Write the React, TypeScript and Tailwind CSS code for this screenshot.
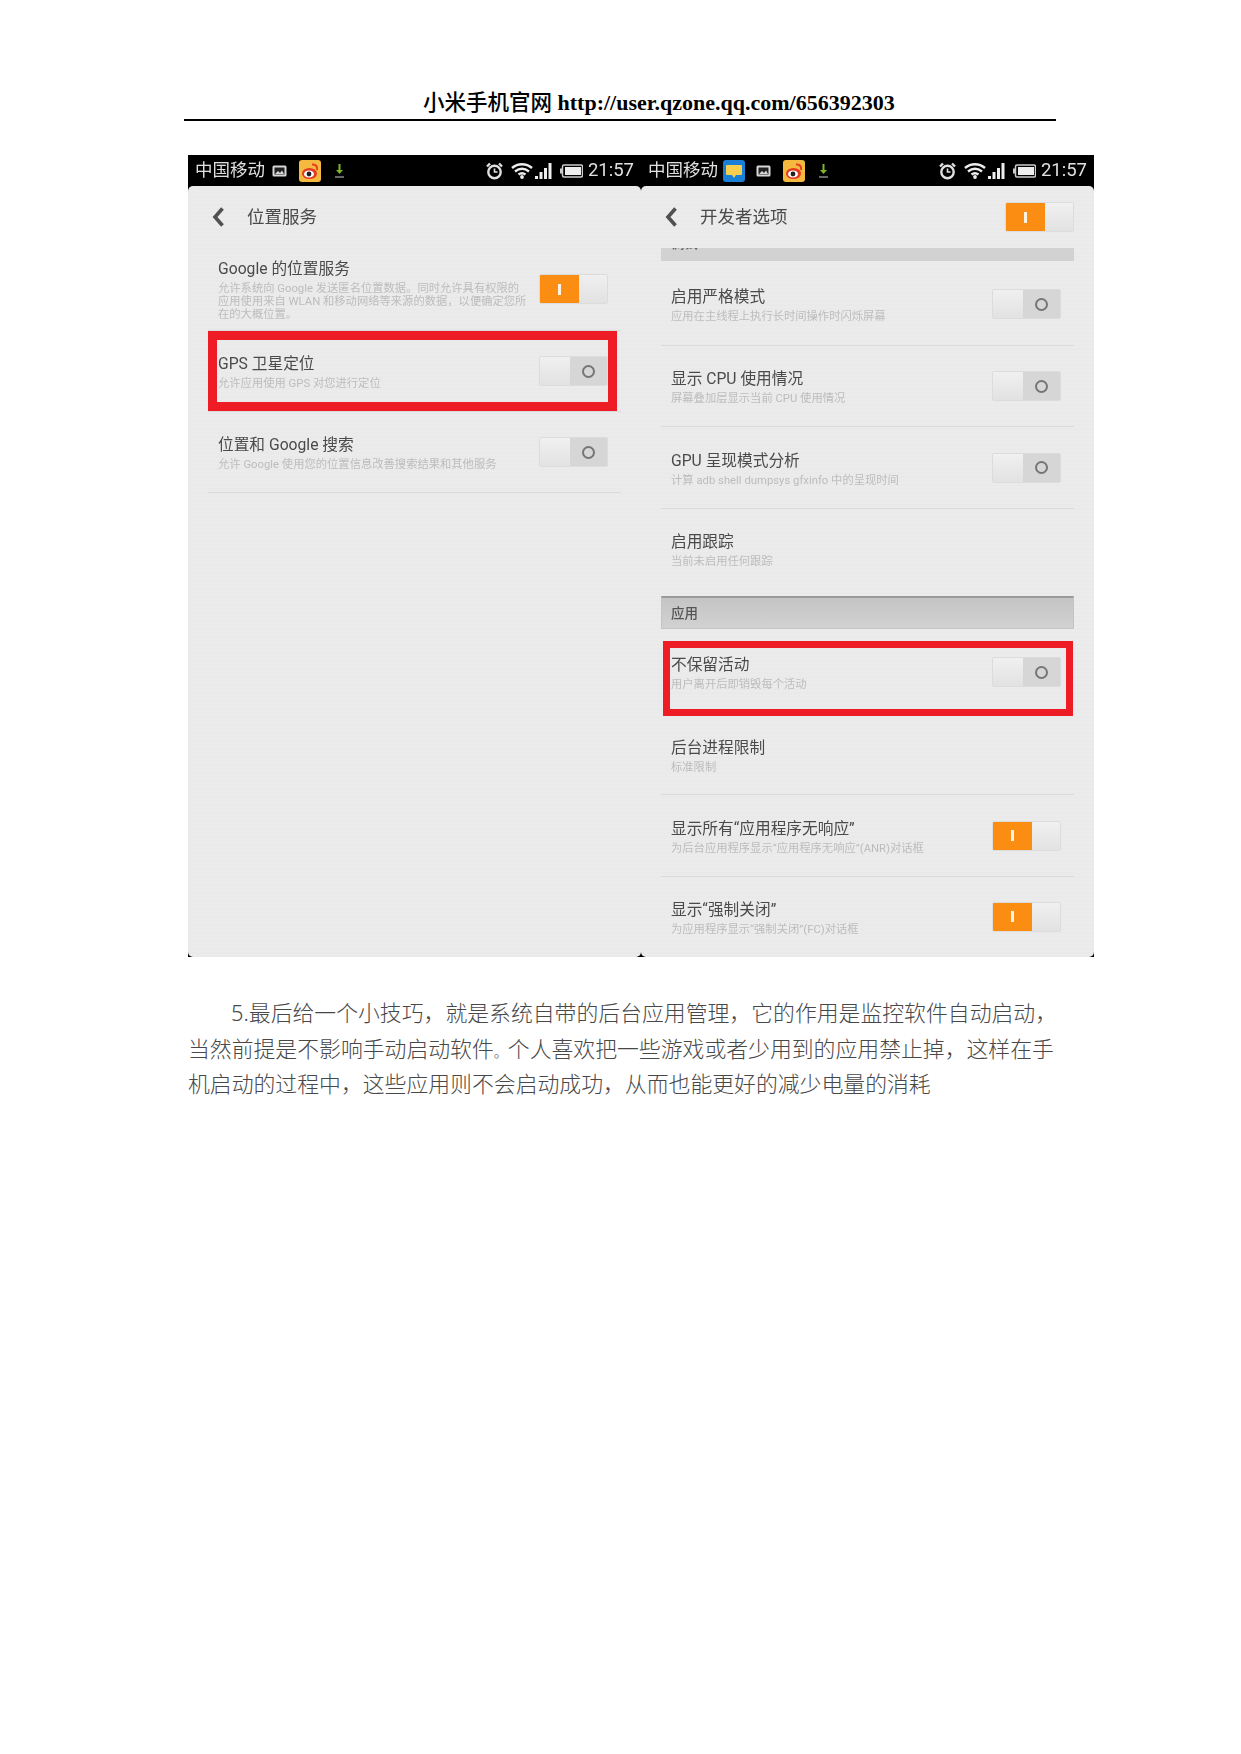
import React from 'react';

type RowData = {
  title: string;
  subs: string[];
  on?: boolean;
  hasToggle?: boolean;
  height: string;
  divider?: boolean;
  box?: string;
};

const leftRows: RowData[] = [
  {
    title: 'Google 的位置服务',
    subs: [
      '允许系统向 Google 发送匿名位置数据。同时允许具有权限的',
      '应用使用来自 WLAN 和移动网络等来源的数据，以便确定您所',
      '在的大概位置。',
    ],
    on: true,
    hasToggle: true,
    height: 'h-[82px]',
    divider: true,
  },
  {
    title: 'GPS 卫星定位',
    subs: ['允许应用使用 GPS 对您进行定位'],
    hasToggle: true,
    height: 'h-[80px]',
    divider: true,
    box: 'top-0 left-0 w-[409px] h-[80px] border-[9px]',
  },
  {
    title: '位置和 Google 搜索',
    subs: ['允许 Google 使用您的位置信息改善搜索结果和其他服务'],
    hasToggle: true,
    height: 'h-[80px]',
    divider: true,
  },
];

const debugRows: RowData[] = [
  { title: '启用严格模式', subs: ['应用在主线程上执行长时间操作时闪烁屏幕'], hasToggle: true, height: 'h-[82px] pt-[2px]', divider: true },
  { title: '显示 CPU 使用情况', subs: ['屏幕叠加层显示当前 CPU 使用情况'], hasToggle: true, height: 'h-[80px]', divider: true },
  { title: 'GPU 呈现模式分析', subs: ['计算 adb shell dumpsys gfxinfo 中的呈现时间'], hasToggle: true, height: 'h-[81px]', divider: true },
  { title: '启用跟踪', subs: ['当前未启用任何跟踪'], height: 'h-[80px]' },
];

const appRows: RowData[] = [
  {
    title: '不保留活动',
    subs: ['用户离开后即销毁每个活动'],
    hasToggle: true,
    height: 'h-[86px]',
    box: 'top-[12px] left-[2px] w-[410px] h-[75px] border-[7px]',
  },
  { title: '后台进程限制', subs: ['标准限制'], height: 'h-[79px]', divider: true },
  { title: '显示所有“应用程序无响应”', subs: ['为后台应用程序显示“应用程序无响应”(ANR)对话框'], on: true, hasToggle: true, height: 'h-[81px]', divider: true },
  { title: '显示“强制关闭”', subs: ['为应用程序显示“强制关闭”(FC)对话框'], on: true, hasToggle: true, height: 'h-[79px]' },
];

const Toggle = ({ on }: { on?: boolean }) =>
  on ? (
    <div className="flex h-[30px] w-[69px] shrink-0 overflow-hidden rounded-[2px] border border-[#dcdcdc]">
      <div className="flex w-[39px] items-center justify-center bg-[#fb8e12]">
        <div className="h-[11px] w-[3px] bg-[#fdf3e2]" />
      </div>
      <div className="flex-1 bg-gradient-to-b from-[#f0f0f0] to-[#e2e2e2]" />
    </div>
  ) : (
    <div className="flex h-[30px] w-[69px] shrink-0 overflow-hidden rounded-[2px] border border-[#dcdcdc]">
      <div className="w-[30px] bg-gradient-to-b from-[#f0f0f0] to-[#e2e2e2]" />
      <div className="flex flex-1 items-center justify-center bg-[#d6d6d6]">
        <div className="h-[13px] w-[13px] rounded-full border-2 border-[#757575]" />
      </div>
    </div>
  );

const Row = ({ row }: { row: RowData }) => (
  <div className={`relative flex items-center justify-between pl-[10px] pr-[13px] ${row.height} ${row.divider ? 'box-content border-b border-[#dadada]' : ''}`}>
    <div className="pt-[2px]">
      <div className="text-[15.7px] leading-[20px] text-[#4a4a4a]">{row.title}</div>
      <div className="mt-[3px] text-[11.3px] leading-[13px] text-[#bcbcbc]">
        {row.subs.map((s) => (
          <div key={s} className="whitespace-nowrap">{s}</div>
        ))}
      </div>
    </div>
    {row.hasToggle && <Toggle on={row.on} />}
    {row.box && <div className={`absolute border-[#ee1c25] ${row.box}`} />}
  </div>
);

const ImageIcon = () => (
  <svg width="15" height="12" viewBox="0 0 15 12" className="shrink-0">
    <rect x="0.5" y="0.5" width="14" height="11" rx="1.5" fill="#d8d8d8" />
    <rect x="2.5" y="2.5" width="10" height="7" fill="#222" />
    <path d="M3 9l3-3 2 2 2-2.5 2 3.5z" fill="#d8d8d8" />
  </svg>
);

const WeiboIcon = () => (
  <svg width="22" height="22" viewBox="0 0 22 22" className="shrink-0">
    <rect width="22" height="22" rx="3" fill="#f6b93f" />
    <ellipse cx="10.5" cy="13.5" rx="7.5" ry="5.5" fill="#e33b22" />
    <path d="M13 4.500c3.500-.6 6 2 5 5.500" stroke="#e33b22" strokeWidth="2" fill="none" />
    <ellipse cx="10" cy="14" rx="5" ry="3.600" fill="#fff" />
    <circle cx="10" cy="14" r="2.400" fill="#222" />
  </svg>
);

const MessageIcon = () => (
  <svg width="22" height="22" viewBox="0 0 22 22" className="shrink-0">
    <rect width="22" height="22" rx="3" fill="#1a7fd6" />
    <path d="M4 5h14a1 1 0 0 1 1 1v8a1 1 0 0 1-1 1h-5l-2 3-2-3H4a1 1 0 0 1-1-1V6a1 1 0 0 1 1-1z" fill="#f7cf4e" />
  </svg>
);

const DownloadIcon = () => (
  <svg width="11" height="16" viewBox="0 0 11 16" className="shrink-0">
    <path d="M4.500 1h2v6h2.500l-3.500 4-3.500-4h2.500z" fill="#7fb52a" />
    <rect x="1" y="13" width="9" height="2" fill="#666" />
  </svg>
);

const AlarmIcon = () => (
  <svg width="17" height="18" viewBox="0 0 17 18" className="shrink-0">
    <circle cx="8.500" cy="10" r="6.200" stroke="#e0e0e0" strokeWidth="2.400" fill="none" />
    <path d="M8.500 6.500v3.500h3" stroke="#e0e0e0" strokeWidth="1.600" fill="none" />
    <path d="M1 4.500l3-3M16 4.500l-3-3" stroke="#e0e0e0" strokeWidth="2.400" />
  </svg>
);

const WifiIcon = () => (
  <svg width="22" height="17" viewBox="0 0 22 17" className="shrink-0">
    <path d="M1 6c6-5 14-5 20 0M4 9.500c4.500-3.500 9.500-3.500 14 0M7.500 12.500c2-1.500 5-1.500 7 0" stroke="#eeeeee" strokeWidth="2.400" fill="none" />
    <circle cx="11" cy="15" r="1.900" fill="#eeeeee" />
  </svg>
);

const SignalIcon = () => (
  <svg width="17" height="16" viewBox="0 0 17 16" className="shrink-0">
    <rect x="0" y="13" width="3" height="3" fill="#eeeeee" />
    <rect x="4.500" y="9" width="3" height="7" fill="#eeeeee" />
    <rect x="9" y="5" width="3" height="11" fill="#eeeeee" />
    <rect x="13.500" y="0" width="3" height="16" fill="#eeeeee" />
  </svg>
);

const BatteryIcon = () => (
  <svg width="23" height="14" viewBox="0 0 23 14" className="shrink-0">
    <rect x="2.500" y="1" width="20" height="12" rx="1.500" stroke="#ccc" strokeWidth="1.500" fill="none" />
    <rect x="0" y="4.500" width="2" height="5" fill="#ccc" />
    <rect x="5" y="3" width="16" height="8" fill="#eeeeee" />
  </svg>
);

const StatusBar = ({ withMessage }: { withMessage?: boolean }) => (
  <div className="flex h-[31px] items-center bg-black pl-[7px] pr-[7px] text-[#e0e0e0]">
    <span className="text-[17.5px] leading-none">中国移动</span>
    {withMessage && (
      <span className="ml-[5px]">
        <MessageIcon />
      </span>
    )}
    <span className={withMessage ? 'ml-[11px]' : 'ml-[7px]'}>
      <ImageIcon />
    </span>
    <span className="ml-3">
      <WeiboIcon />
    </span>
    <span className="ml-[13px]">
      <DownloadIcon />
    </span>
    <div className="flex-1" />
    <AlarmIcon />
    <span className="ml-2">
      <WifiIcon />
    </span>
    <span className="ml-[2px]">
      <SignalIcon />
    </span>
    <span className="ml-2">
      <BatteryIcon />
    </span>
    <span className="ml-[5px] text-[18.5px] leading-none">21:57</span>
  </div>
);

const Chevron = () => (
  <svg width="12" height="22" viewBox="0 0 12 22" className="shrink-0">
    <path d="M10.500 2.500L3 11l7.500 8.500" stroke="#505050" strokeWidth="3.600" fill="none" />
  </svg>
);

const PanelHeader = ({ title, on }: { title: string; on?: boolean }) => (
  <div className="-mx-5 flex h-[62px] items-center pl-6 pr-5">
    <Chevron />
    <span className="ml-[23px] text-[17.5px] text-[#4a4a4a]">{title}</span>
    <div className="flex-1" />
    {on && <Toggle on />}
  </div>
);

const panelBody =
  "h-[771px] rounded-[5px] bg-[repeating-linear-gradient(0deg,#e9e9e9_0px,#ececec_2px,#e9e9e9_4px)] px-5";

const App = (): React.ReactElement => (
  <div className="min-h-[1754px] bg-white pt-[89px] font-['Roboto','Noto_Sans_CJK_SC',sans-serif]">
    <div className="ml-[184px] w-[872px] border-b-2 border-black pb-[2px] pl-[239px]">
      <div className="whitespace-nowrap font-['Liberation_Serif','Noto_Sans_CJK_SC',serif] text-[22px] leading-[28px] font-bold text-black">
        <span className="text-[21.5px] font-medium">小米手机官网</span> http://user.qzone.qq.com/656392303
      </div>
    </div>

    <div className="mt-[34px] ml-[188px] flex w-[906px] bg-black blur-[0.6px]">
      <div className="w-[453px]">
        <StatusBar />
        <div className={panelBody}>
          <PanelHeader title="位置服务" />
          {leftRows.map((row) => (
            <Row key={row.title} row={row} />
          ))}
        </div>
      </div>
      <div className="w-[453px]">
        <StatusBar withMessage />
        <div className={panelBody}>
          <PanelHeader title="开发者选项" on />
          <div className="h-[13px] overflow-hidden bg-[#d2d2d2] pl-[10px]">
            <div className="-mt-[12px] text-[13.5px] leading-[15px] font-medium text-[#666]">调试</div>
          </div>
          {debugRows.map((row) => (
            <Row key={row.title} row={row} />
          ))}
          <div className="mt-[7px] flex h-[33px] items-center border border-t-2 border-[#c4c4c4] border-t-[#9a9a9a] bg-gradient-to-b from-[#c4c4c4] to-[#d2d2d2] pl-[9px] text-[13.5px] font-medium text-[#555]">
            应用
          </div>
          {appRows.map((row) => (
            <Row key={row.title} row={row} />
          ))}
        </div>
      </div>
    </div>

    <p className="mt-[38px] ml-[188px] w-[880px] indent-[43px] font-['Noto_Sans','Noto_Sans_CJK_SC',sans-serif] text-[21.85px] leading-[35.5px] font-light text-[#484848]">
      5.最后给一个小技巧，就是系统自带的后台应用管理，它的作用是监控软件自动启动，当然前提是不影响手动启动软件<span className="text-[14px] leading-none">。</span>个人喜欢把一些游戏或者少用到的应用禁止掉，这样在手机启动的过程中，这些应用则不会启动成功，从而也能更好的减少电量的消耗
    </p>
  </div>
);

export default App;
